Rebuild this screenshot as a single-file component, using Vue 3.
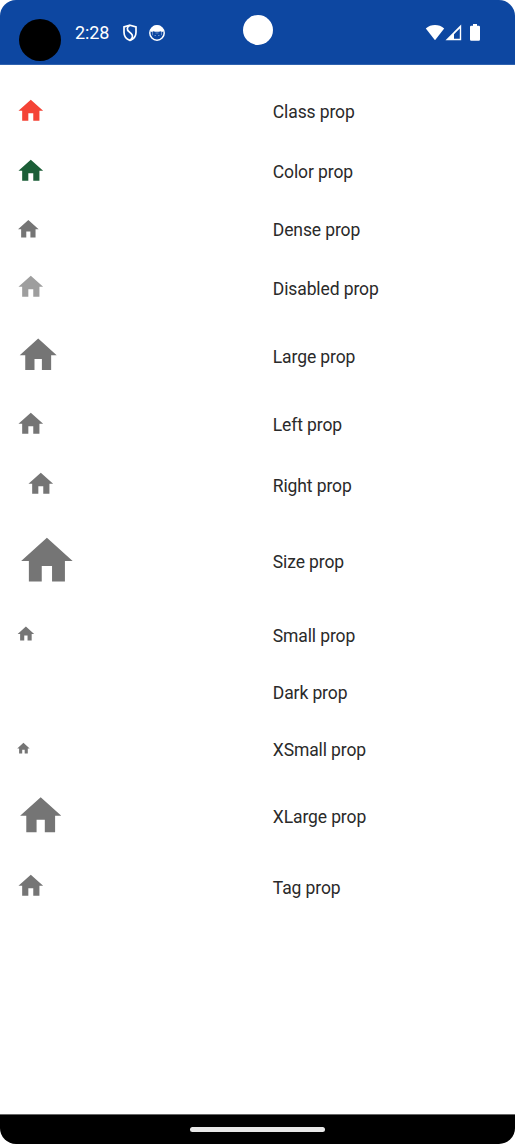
<script setup>
const rows = [
  { label: 'Class prop', size: 29.6, height: 60.5, tone: 'red' },
  { label: 'Color prop', size: 29.6, height: 60.3, tone: 'green' },
  { label: 'Dense prop', size: 24.7, height: 55.9 },
  { label: 'Disabled prop', size: 29.6, height: 60.7, tone: 'disabled' },
  { label: 'Large prop', size: 44.4, height: 75.5 },
  { label: 'Left prop', size: 29.6, height: 60.7 },
  { label: 'Right prop', size: 29.6, height: 60.7, tone: 'right' },
  { label: 'Size prop', size: 61.8, height: 92.5 },
  { label: 'Small prop', size: 19.8, height: 54.3 },
  { label: 'Dark prop', size: 29.6, height: 59.9, tone: 'dark' },
  { label: 'XSmall prop', size: 14.9, height: 54.3 },
  { label: 'XLarge prop', size: 49.4, height: 80.4 },
  { label: 'Tag prop', size: 29.6, height: 60.7 },
]
</script>

<template>
  <div class="screen">
    <header class="status">
      <span class="puck"></span>
      <span class="time">2:28</span>
      <svg class="shield" viewBox="0 0 16 18">
        <path d="M8 1.2 14 3v5.2c0 3.9-2.6 6.9-6 8.2-3.4-1.3-6-4.3-6-8.2V3Z" />
        <path d="M7.500 1.500C4.800 3.200 4.600 5.700 7 7.700l2.200 2c2 2 1.600 4.400-.8 6.300" />
      </svg>
      <svg class="face" viewBox="0 0 18 18">
        <circle cx="9" cy="9" r="7.2" />
        <path class="fill" d="M2.200 7.200C3 3.500 5.800 1.500 9 1.500s6 2 6.800 5.700l-1.800.8-1.500-.7-1.500.5H7l-1.500-.5L4 8Z" />
        <path class="mark" d="M4.500 8v3.200M13.500 8v3.200M6.500 11.500h1.500M10 11.500h1.500M7.500 9h3" />
      </svg>
      <span class="camera"></span>
      <svg class="wifi" viewBox="0 0 20 17"><path d="M.8 4.400C5.800-.2 14.200-.2 19.200 4.400L10 16.200Z" /></svg>
      <svg class="signal" viewBox="0 0 17 17">
        <path d="M16.200.5V16.200H.500Z" />
        <path class="gap" d="M14.800 4.500V14.700H9V10.300Z" />
      </svg>
      <svg class="battery" viewBox="0 0 10 17"><path d="M3 0h4v1.800h1.800q1.200 0 1.200 1.200v12.600q0 1.200-1.200 1.200H1.200Q0 16.800 0 15.600V3q0-1.200 1.200-1.200H3Z" /></svg>
    </header>
    <main class="list">
      <div v-for="row in rows" :key="row.label" class="row" :style="{ height: row.height + 'px' }">
        <div class="cell">
          <svg class="home" :class="row.tone" :style="{ width: row.size + 'px', height: row.size + 'px' }" viewBox="0 0 24 24">
            <path d="M10 20v-6h4v6h5v-8h3L12 3 2 12h3v8Z" />
          </svg>
        </div>
        <div class="label">{{ row.label }}</div>
      </div>
    </main>
    <footer class="nav"><span class="handle"></span></footer>
  </div>
</template>

<style>
body { background: #fff; }
</style>

<style scoped>
.screen {
  width: 515px;
  height: 1144px;
  display: flex;
  flex-direction: column;
  overflow: hidden;
  border-radius: 16px;
  background: #fff;
  font-family: Roboto, "Liberation Sans", sans-serif;
}
.status {
  position: relative;
  flex: none;
  height: 65px;
  box-sizing: border-box;
  display: flex;
  align-items: center;
  background: #0d47a1;
  border-bottom: 1px solid #2f62af;
  color: #fff;
}
.status svg { display: block; flex: none; fill: #fff; margin-top: 1px; }
.puck {
  width: 42px;
  height: 42px;
  margin: 15px 0 0 19px;
  border-radius: 50%;
  background: #000;
}
.time {
  width: 47px;
  margin-left: 14px;
  font-size: 18px;
  line-height: 24px;
  letter-spacing: -0.1px;
  padding-top: 2px;
}
.status .shield {
  width: 16px;
  height: 18px;
  fill: none;
  stroke: #fff;
  stroke-width: 1.7;
}
.status .face {
  width: 18px;
  height: 18px;
  margin-left: 10px;
  fill: none;
  stroke: #fff;
  stroke-width: 1.5;
}
.face .fill { fill: #fff; stroke: none; }
.face .mark { stroke-width: 1; opacity: .4; }
.camera {
  position: absolute;
  left: 243px;
  top: 15px;
  width: 30px;
  height: 30px;
  border-radius: 50%;
  background: #fff;
}
.status .wifi { width: 20px; height: 17px; margin-left: auto; }
.signal { width: 17px; height: 17px; }
.signal .gap { fill: #0d47a1; }
.status .battery { width: 10px; height: 17px; margin: 1px 35px 0 8px; }
.list {
  flex: 1;
  padding-top: 15px;
}
.row {
  display: grid;
  grid-template-columns: 256.5px 1fr;
  align-items: center;
}
.cell { padding: 0.5px 0 0 16.2px; }
.home { display: block; fill: #757575; }
.red { fill: #f44336; }
.green { fill: #1b5e37; }
.disabled { fill: #9e9e9e; }
.dark { fill: #fff; }
.right { margin-left: 9.7px; }
.label {
  padding: 3.4px 0 0 16.3px;
  font-size: 17.5px;
  line-height: 24px;
  letter-spacing: -0.11px;
  color: #2a2a2a;
}
.nav {
  flex: none;
  height: 30px;
  box-sizing: border-box;
  display: flex;
  align-items: center;
  justify-content: center;
  background: #000;
  border-top: 1px solid #666;
}
.handle {
  width: 135px;
  height: 5px;
  border-radius: 3px;
  background: #e8e8e8;
}
</style>
